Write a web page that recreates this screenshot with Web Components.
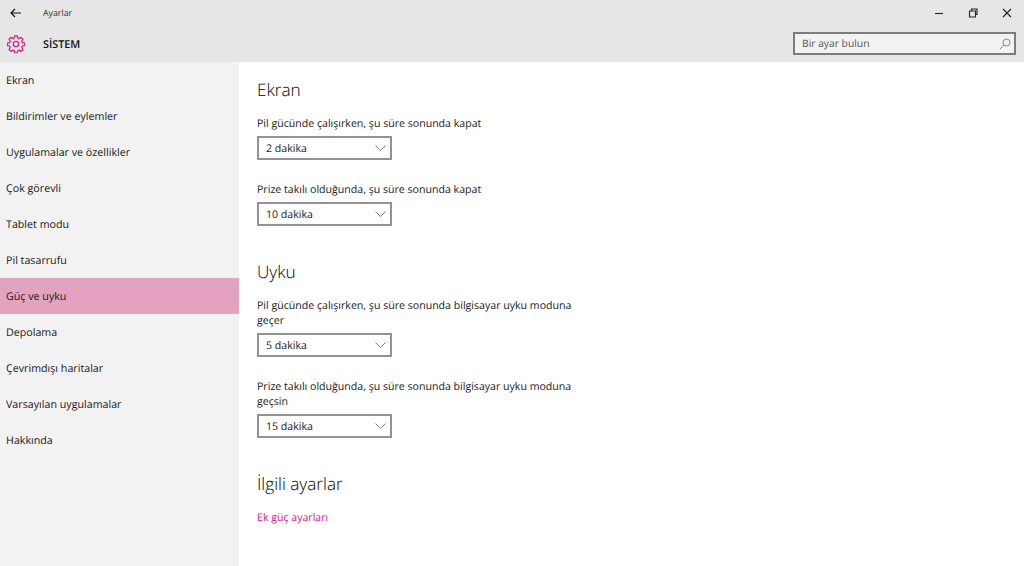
<!DOCTYPE html>
<html lang="tr">
<head>
<meta charset="utf-8">
<title>Ayarlar</title>
<style>
  html, body { margin: 0; height: 100%; overflow: hidden; }
  body { font-family: "Open Sans", "Noto Sans", sans-serif; color: #1a1a1a; background: #fff; text-rendering: geometricPrecision; }
  settings-app { height: 566px; }
</style>
</head>
<body>
<settings-app>
  <title-bar slot="header"></title-bar>
  <nav-item slot="nav">Ekran</nav-item>
  <nav-item slot="nav">Bildirimler ve eylemler</nav-item>
  <nav-item slot="nav">Uygulamalar ve özellikler</nav-item>
  <nav-item slot="nav">Çok görevli</nav-item>
  <nav-item slot="nav">Tablet modu</nav-item>
  <nav-item slot="nav">Pil tasarrufu</nav-item>
  <nav-item slot="nav" selected>Güç ve uyku</nav-item>
  <nav-item slot="nav">Depolama</nav-item>
  <nav-item slot="nav">Çevrimdışı haritalar</nav-item>
  <nav-item slot="nav">Varsayılan uygulamalar</nav-item>
  <nav-item slot="nav">Hakkında</nav-item>

  <settings-section heading="Ekran">
    <combo-field value="2 dakika">Pil gücünde çalışırken, şu süre sonunda kapat</combo-field>
    <combo-field value="10 dakika">Prize takılı olduğunda, şu süre sonunda kapat</combo-field>
  </settings-section>
  <settings-section heading="Uyku">
    <combo-field value="5 dakika">Pil gücünde çalışırken, şu süre sonunda bilgisayar uyku moduna geçer</combo-field>
    <combo-field value="15 dakika">Prize takılı olduğunda, şu süre sonunda bilgisayar uyku moduna geçsin</combo-field>
  </settings-section>
  <settings-section heading="İlgili ayarlar">
    <a-link>Ek güç ayarları</a-link>
  </settings-section>
</settings-app>

<script>
const html = String.raw;

class SettingsApp extends HTMLElement {
  constructor() {
    super();
    this.attachShadow({ mode: 'open' });
    this.shadowRoot.innerHTML = html`
      <style>
        :host { display: grid; grid-template-columns: 239px 1fr; grid-template-rows: 62px 1fr; }
        .head { grid-column: 1 / 3; }
        .nav { background: #f2f2f2; display: flex; flex-direction: column; }
        .main { padding: 4px 0 0 18px; }
      </style>
      <div class="head"><slot name="header"></slot></div>
      <div class="nav"><slot name="nav"></slot></div>
      <div class="main"><slot></slot></div>
    `;
  }
}

class TitleBar extends HTMLElement {
  constructor() {
    super();
    this.attachShadow({ mode: 'open' });
    this.shadowRoot.innerHTML = html`
      <style>
        :host { display: flex; flex-direction: column; height: 62px; box-sizing: border-box; background: #e6e6e6; border-top: 1px solid #e4e0ee; }
        .top { display: flex; align-items: center; height: 24px; }
        .back { width: 32px; display: flex; justify-content: center; }
        .app { margin-left: 11px; font-size: 8.8px; color: #333; flex: 1; }
        .btns { display: flex; }
        .btns span { width: 34px; display: flex; justify-content: center; }
        .row { display: flex; align-items: center; height: 37px; }
        .gear { width: 32px; display: flex; justify-content: center; }
        .name { margin-left: 11px; font-size: 10.8px; font-weight: 600; color: #111; flex: 1; padding-top: 1px; }
        .search { width: 223px; height: 23px; box-sizing: border-box; margin-right: 8px; margin-bottom: 1px; border: 2px solid #7d7d7d; background: #f2f2f2;
          display: flex; align-items: center; justify-content: space-between; padding: 1px 3px 0 7px; font-size: 10.3px; color: #555; }
      </style>
      <div class="top">
        <div class="back">
          <svg width="12" height="10" viewBox="0 0 12 10" fill="none" stroke="#111" stroke-width="1.2"><path d="M11 5H1.2M5 1 1 5l4 4"/></svg>
        </div>
        <div class="app">Ayarlar</div>
        <div class="btns">
          <span><svg width="10" height="10" viewBox="0 0 10 10" fill="none" stroke="#222" stroke-width="1.1"><path d="M1 5.500h8"/></svg></span>
          <span><svg width="10" height="10" viewBox="0 0 10 10" fill="none" stroke="#222" stroke-width="1.1"><path d="M1.500 3h6v6h-6zM3.500 3V1h5.500v5.500H7.500"/></svg></span>
          <span><svg width="10" height="10" viewBox="0 0 10 10" fill="none" stroke="#222" stroke-width="1.1"><path d="M1 1l8 8M9 1l-8 8"/></svg></span>
        </div>
      </div>
      <div class="row">
        <div class="gear">
          <svg width="18" height="18" viewBox="0 0 20 20" fill="none" stroke="#d81e7e" stroke-width="1.4" stroke-linejoin="round">
            <path d="M8.500 1.200h3l.5 2.500 1.500.6 2.200-1.400 2.100 2.100-1.400 2.200.6 1.500 2.500.5v3l-2.500.5-.6 1.500 1.400 2.200-2.100 2.100-2.200-1.400-1.500.6-.5 2.500h-3l-.5-2.500-1.500-.6-2.200 1.400-2.100-2.100 1.400-2.200-.6-1.500-2.500-.5v-3l2.500-.5.6-1.500-1.400-2.200 2.100-2.100 2.200 1.400 1.500-.6z" transform="translate(0 -.3)"/>
            <circle cx="10" cy="10" r="3"/>
          </svg>
        </div>
        <div class="name">SİSTEM</div>
        <div class="search">
          <span>Bir ayar bulun</span>
          <svg width="12" height="12" viewBox="0 0 12 12" fill="none" stroke="#888" stroke-width="1"><circle cx="7.500" cy="4.500" r="3.500"/><path d="M5 7l-4 4"/></svg>
        </div>
      </div>
    `;
  }
}

class NavItem extends HTMLElement {
  constructor() {
    super();
    this.attachShadow({ mode: 'open' });
    this.shadowRoot.innerHTML = html`
      <style>
        :host { display: flex; align-items: center; height: 36px; box-sizing: border-box; padding: 2px 0 0 6px; font-size: 10.7px; color: #1a1a1a; }
        :host([selected]) { background: #e3a2bf; }
      </style>
      <slot></slot>
    `;
  }
}

class SettingsSection extends HTMLElement {
  constructor() {
    super();
    this.attachShadow({ mode: 'open' });
    this.shadowRoot.innerHTML = html`
      <style>
        :host { display: block; }
        h2 { margin: 0; padding: 13px 0 14px; font-size: 17.2px; font-weight: 300; line-height: 23px; color: #000; }
        .body { display: flex; flex-direction: column; }
      </style>
      <h2></h2>
      <div class="body"><slot></slot></div>
    `;
    this.shadowRoot.querySelector('h2').textContent = this.getAttribute('heading');
  }
}

class ComboField extends HTMLElement {
  constructor() {
    super();
    this.attachShadow({ mode: 'open' });
    this.shadowRoot.innerHTML = html`
      <style>
        :host { display: block; padding-bottom: 22px; }
        .label { width: 330px; font-size: 10.6px; line-height: 15px; color: #1a1a1a; padding: 1px 0 4px; }
        .box { width: 135px; height: 24px; box-sizing: border-box; border: 2px solid #929292; background: #fff;
          display: flex; align-items: center; justify-content: space-between; padding: 0 4px 0 7px; font-size: 10.6px; }
        .value { padding-top: 1px; }
      </style>
      <div class="label"><slot></slot></div>
      <div class="box">
        <span class="value"></span>
        <svg width="11" height="6" viewBox="0 0 11 6" fill="none" stroke="#808080" stroke-width="1"><path d="M.5.500l5 5 5-5"/></svg>
      </div>
    `;
    this.shadowRoot.querySelector('.value').textContent = this.getAttribute('value');
  }
}

class ALink extends HTMLElement {
  constructor() {
    super();
    this.attachShadow({ mode: 'open' });
    this.shadowRoot.innerHTML = html`
      <style>
        :host { display: block; font-size: 10.6px; line-height: 15px; padding-top: 1px; color: #d81e7e; }
      </style>
      <slot></slot>
    `;
  }
}

customElements.define('settings-app', SettingsApp);
customElements.define('title-bar', TitleBar);
customElements.define('nav-item', NavItem);
customElements.define('settings-section', SettingsSection);
customElements.define('combo-field', ComboField);
customElements.define('a-link', ALink);
</script>
</body>
</html>
